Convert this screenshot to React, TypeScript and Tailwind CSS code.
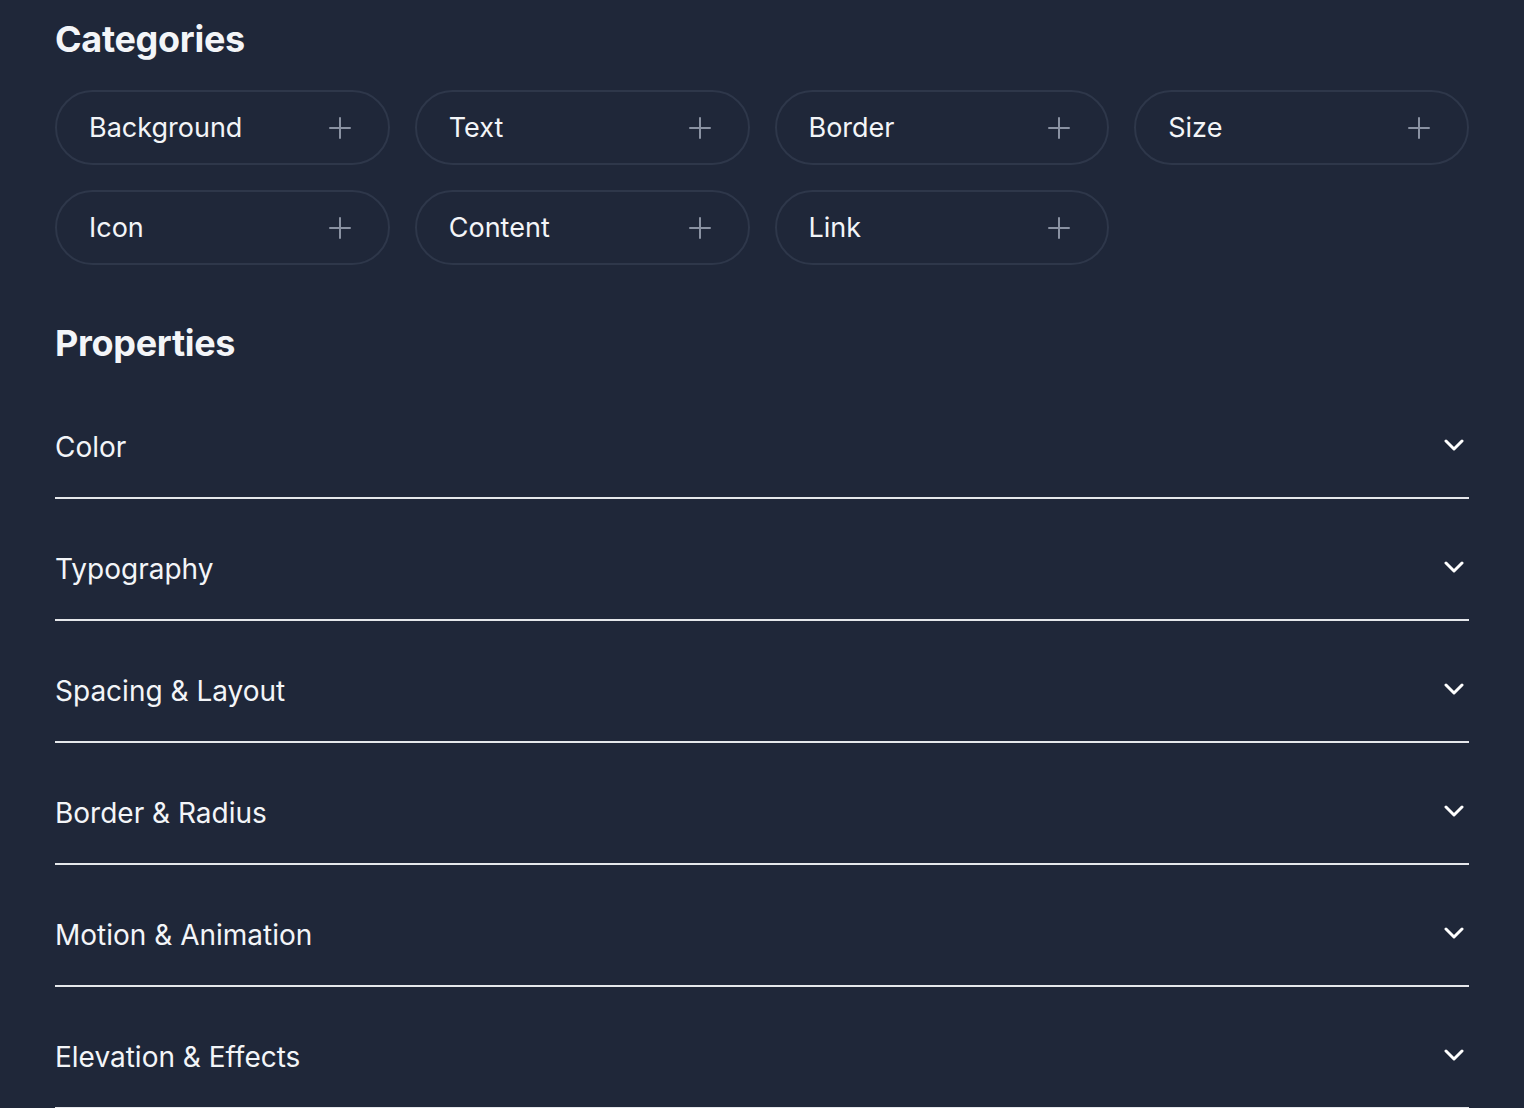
const categories = ["Background", "Text", "Border", "Size", "Icon", "Content", "Link"];

const properties = [
  "Color",
  "Typography",
  "Spacing & Layout",
  "Border & Radius",
  "Motion & Animation",
  "Elevation & Effects",
];

function PlusIcon() {
  return (
    <svg width="22" height="22" viewBox="0 0 22 22" fill="none" stroke="#8a92a2" strokeWidth="2" strokeLinecap="round">
      <path d="M1 11h20M11 1v20" />
    </svg>
  );
}

function ChevronDown() {
  return (
    <svg width="20" height="12" viewBox="0 0 20 12" fill="none" stroke="#ffffff" strokeWidth="3" strokeLinecap="round" strokeLinejoin="round">
      <path d="M2 2l8 8 8-8" />
    </svg>
  );
}

export default function App() {
  return (
    <div className="min-h-[1108px] bg-[#1f2739] px-[55px] pt-[19px] font-['Inter','Noto_Sans',sans-serif] text-[#f3f5f8]">
      <h2 className="text-[36px] leading-[40px] font-bold tracking-[-0.3px]">Categories</h2>

      <div className="mt-[31px] grid grid-cols-4 gap-x-[25px] gap-y-[25px]">
        {categories.map((name) => (
          <button
            key={name}
            type="button"
            className="flex h-[75px] items-center justify-between rounded-full border-2 border-[#2e374a] pr-[37px] pl-[32px] text-left"
          >
            <span className="text-[27px] leading-[36px]">{name}</span>
            <PlusIcon />
          </button>
        ))}
      </div>

      <h2 className="mt-[58px] text-[36px] leading-[40px] font-bold tracking-[-0.3px]">Properties</h2>

      <div className="mt-[14px] flex flex-col">
        {properties.map((name) => (
          <div
            key={name}
            className="flex items-center justify-between border-b-2 border-[#e5e7eb] pt-[49px] pb-[29px]"
          >
            <span className="text-[28px] leading-[42px]">{name}</span>
            <span className="mr-[5px] mb-[4px] flex">
              <ChevronDown />
            </span>
          </div>
        ))}
      </div>
    </div>
  );
}
